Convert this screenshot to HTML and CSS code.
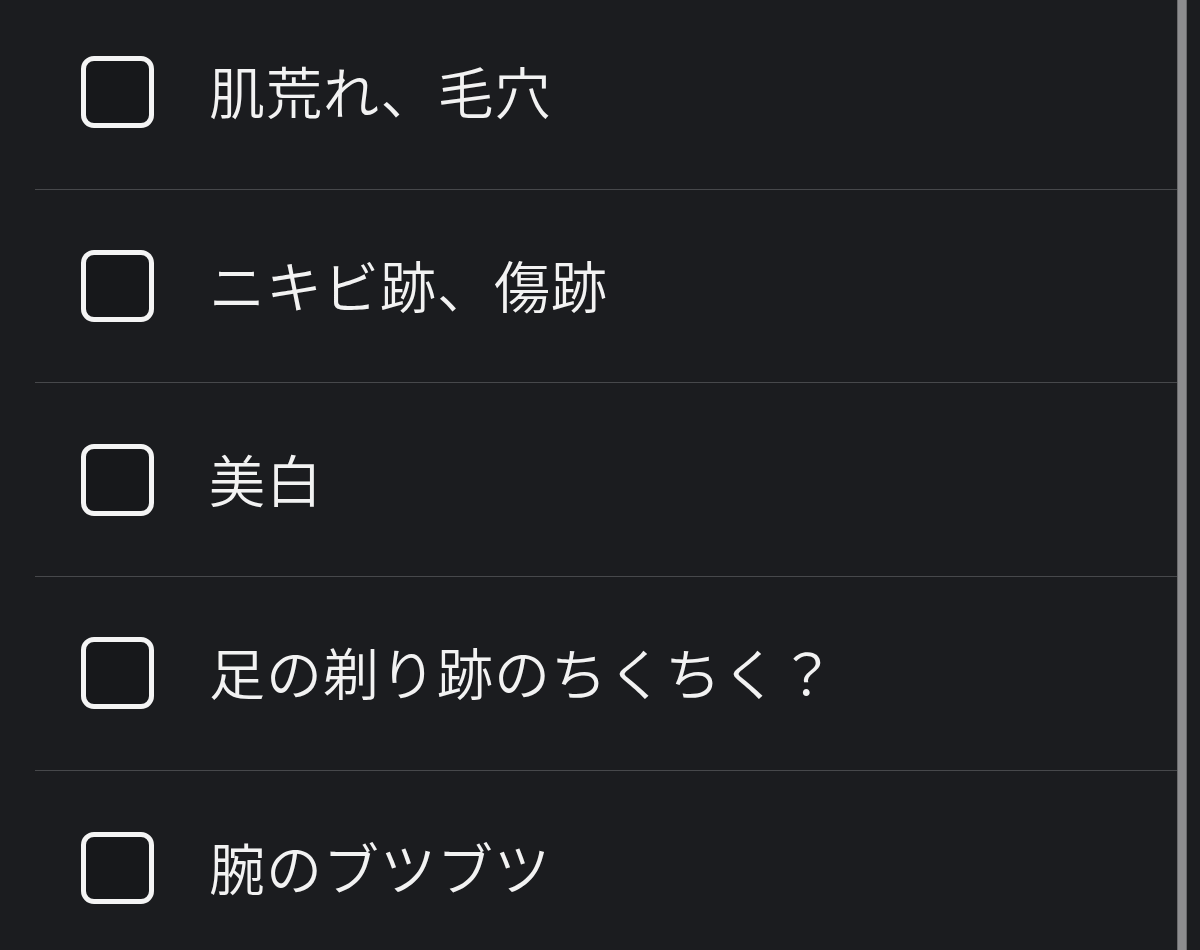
FILE: index.html
```html
<!DOCTYPE html>
<html lang="ja">
<head>
<meta charset="utf-8">
<title>Checklist</title>
<link rel="stylesheet" href="styles.css">
</head>
<body>
<div class="screen">
  <ul class="list">
    <li class="row"><span class="box"></span><span class="label">肌荒れ、毛穴</span></li>
    <li class="row"><span class="box"></span><span class="label">ニキビ跡、傷跡</span></li>
    <li class="row"><span class="box"></span><span class="label">美白</span></li>
    <li class="row"><span class="box"></span><span class="label">足の剃り跡のちくちく？</span></li>
    <li class="row"><span class="box"></span><span class="label">腕のブツブツ</span></li>
  </ul>
  <div class="scrollbar"></div>
</div>
</body>
</html>
```

FILE: styles.css
```css
html, body {
  margin: 0;
  padding: 0;
  background: #1b1c1f;
  height: 100%;
  overflow: hidden;
}
.screen {
  display: flex;
  height: 950px;
  padding-left: 35px;
  padding-right: 13px;
  box-sizing: border-box;
}
.list {
  list-style: none;
  margin: -4px 0 0 0;
  padding: 0;
  flex: 1;
}
.row {
  box-sizing: border-box;
  height: 193.7px;
  border-bottom: 1px solid #47484b;
  display: flex;
  align-items: center;
  padding-left: 46px;
}
.row:last-child {
  border-bottom: none;
}
.box {
  width: 73px;
  height: 72px;
  box-sizing: border-box;
  border: 5px solid #f4f4f4;
  border-radius: 13px;
  background: #17181b;
  flex: none;
}
.label {
  margin-left: 55px;
  margin-bottom: 4px;
  font-family: "Noto Sans CJK JP", "Noto Sans", sans-serif;
  font-weight: 350;
  font-size: 56px;
  color: #f2f2f2;
  line-height: 1;
  letter-spacing: 1px;
}
.scrollbar {
  width: 10px;
  flex: none;
  background: #8d8d8f;
  border-left: 1px solid #6b6b6d;
  border-right: 1px solid #6b6b6d;
  box-sizing: border-box;
}
```
